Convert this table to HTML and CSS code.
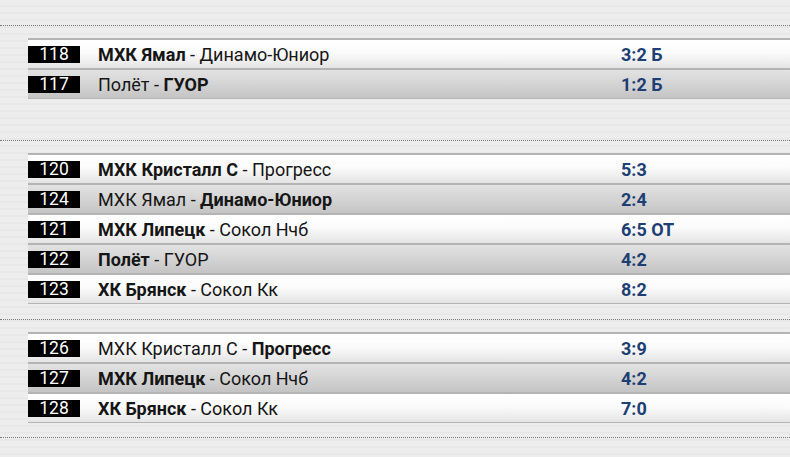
FILE: index.html
```html
<!DOCTYPE html>
<html lang="ru">
<head>
<meta charset="utf-8">
<title>Результаты</title>
<link rel="stylesheet" href="styles.css">
</head>
<body>
<div class="page">
  <div class="top"></div>
  <section class="group g1">
    <div class="row odd"><span class="num">118</span><span class="teams"><b>МХК Ямал</b> - Динамо-Юниор</span><span class="score">3:2 Б</span></div>
    <div class="row even"><span class="num">117</span><span class="teams">Полёт - <b>ГУОР</b></span><span class="score">1:2 Б</span></div>
  </section>
  <section class="group g2">
    <div class="row odd"><span class="num">120</span><span class="teams"><b>МХК Кристалл С</b> - Прогресс</span><span class="score">5:3</span></div>
    <div class="row even"><span class="num">124</span><span class="teams">МХК Ямал - <b>Динамо-Юниор</b></span><span class="score">2:4</span></div>
    <div class="row odd"><span class="num">121</span><span class="teams"><b>МХК Липецк</b> - Сокол Нчб</span><span class="score">6:5 ОТ</span></div>
    <div class="row even"><span class="num">122</span><span class="teams"><b>Полёт</b> - ГУОР</span><span class="score">4:2</span></div>
    <div class="row odd"><span class="num">123</span><span class="teams"><b>ХК Брянск</b> - Сокол Кк</span><span class="score">8:2</span></div>
  </section>
  <section class="group g3">
    <div class="row odd"><span class="num">126</span><span class="teams">МХК Кристалл С - <b>Прогресс</b></span><span class="score">3:9</span></div>
    <div class="row even"><span class="num">127</span><span class="teams"><b>МХК Липецк</b> - Сокол Нчб</span><span class="score">4:2</span></div>
    <div class="row odd"><span class="num">128</span><span class="teams"><b>ХК Брянск</b> - Сокол Кк</span><span class="score">7:0</span></div>
  </section>
  <div class="bottom"></div>
</div>
</body>
</html>
```
FILE: styles.css
```css
html, body {
  margin: 0;
  padding: 0;
}
body {
  width: 790px;
  height: 457px;
  overflow: hidden;
  background: repeating-linear-gradient(180deg, #ededed 0 5px, #e8e8e8 5px 7px);
  font-family: Roboto, "Liberation Sans", Arial, sans-serif;
  color: #161616;
}
.top {
  height: 25px;
}
.group {
  border-top: 1px dotted #7a7a7a;
  padding-top: 12px;
  padding-left: 28px;
}
.g1 { padding-bottom: 41px; }
.g2 { padding-bottom: 15px; }
.g3 { padding-bottom: 14px; }
.row {
  box-sizing: border-box;
  height: 30px;
  display: flex;
  align-items: center;
  border-top: 2px solid #b4b4b4;
}
.row:last-child {
  border-bottom: 1px solid #b4b4b4;
  height: 31px;
}
.row.odd {
  background: linear-gradient(180deg, #ffffff 0%, #fbfbfb 45%, #e4e4e4 100%);
}
.row.even {
  background: linear-gradient(180deg, #e2e2e2 0%, #d4d4d4 50%, #c4c4c4 100%);
}
.num {
  width: 52px;
  height: 17px;
  background: #000;
  color: #fff;
  font-size: 17.5px;
  line-height: 17px;
  text-align: center;
  flex: none;
}
.teams {
  margin-left: 18px;
  width: 523px;
  font-size: 18px;
  flex: none;
  white-space: nowrap;
}
.teams b {
  font-weight: 700;
}
.score {
  font-size: 18px;
  font-weight: 700;
  color: #1d3f73;
  white-space: nowrap;
}
.bottom {
  border-top: 1px dotted #7a7a7a;
}
```
